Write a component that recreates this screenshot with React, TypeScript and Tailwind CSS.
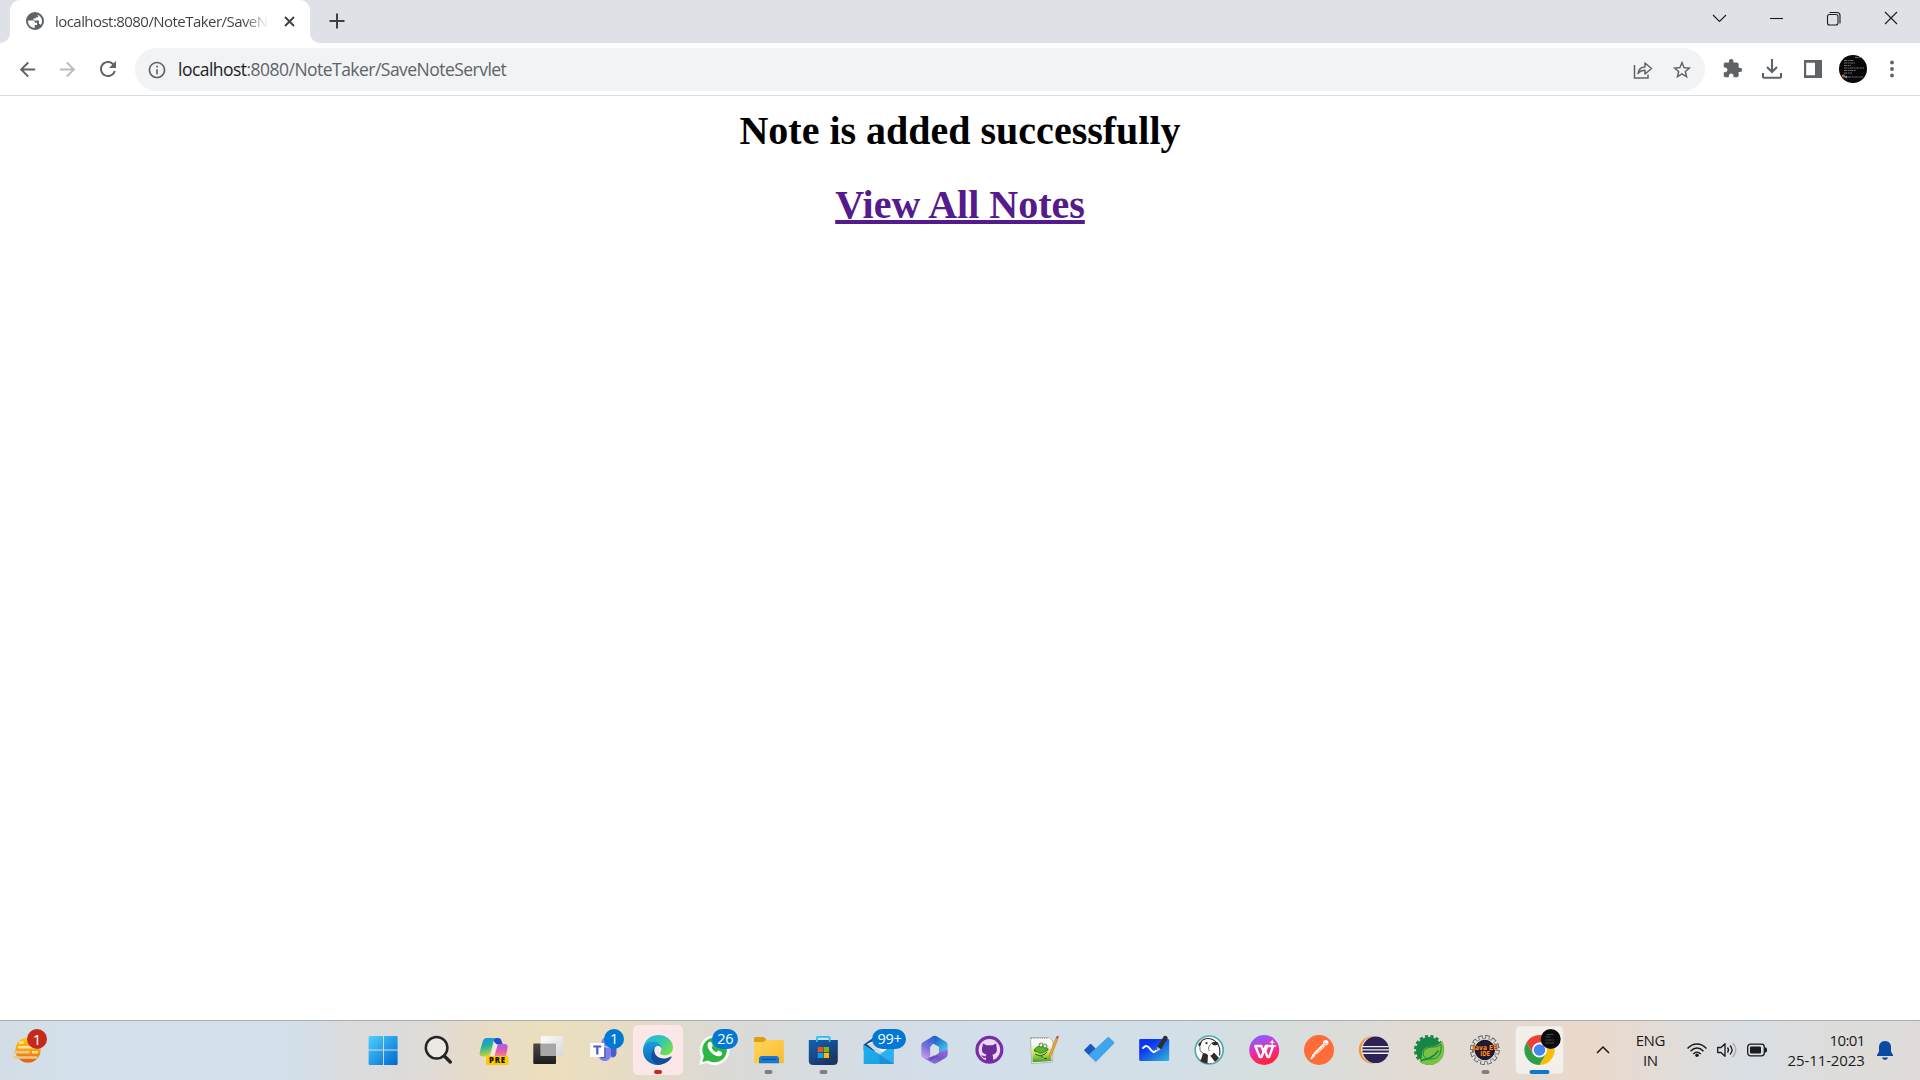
import React from "react";
import { MdArrowBack, MdArrowForward, MdRefresh, MdInfoOutline, MdStarBorder, MdExtension } from "react-icons/md";

type Kids = { children?: React.ReactNode };

function Art({ children }: Kids) {
  return (
    <svg className="block h-[60px] w-full" viewBox="0 0 55 60" preserveAspectRatio="xMinYMin meet" fill="none">
      {children}
    </svg>
  );
}

function StartArt() {
  return (
    <Art>
      <defs>
        <linearGradient id="win" gradientUnits="userSpaceOnUse" x1="14" y1="16" x2="42" y2="45">
          <stop stopColor="#4fd0ff" />
          <stop offset="1" stopColor="#0068cf" />
        </linearGradient>
      </defs>
      <path fill="url(#win)" d="M14.6 16H28v13.6H13.6V17zM28.9 16h13l.7.7v12.9H28.9zM13.6 30.6H28V45H14.3l-.7-.7zM28.9 30.6h13.7v13.7l-.7.7h-13z" />
    </Art>
  );
}

function SearchArt() {
  return (
    <Art>
      <circle cx="26.6" cy="27.7" r="10.8" fill="#f3f0ec" fillOpacity=".6" stroke="#252525" strokeWidth="2.500" />
      <path d="M34.300 36l6 6" stroke="#252525" strokeWidth="3.400" strokeLinecap="round" />
    </Art>
  );
}

function CopilotArt() {
  return (
    <Art>
      <defs>
        <linearGradient id="cpa" x1="0" y1="0" x2="0.2" y2="1">
          <stop stopColor="#1f8fe8" />
          <stop offset=".5" stopColor="#1fb4a0" />
          <stop offset="1" stopColor="#c9cf3a" />
        </linearGradient>
        <linearGradient id="cpb" x1="0" y1="0" x2="0" y2="1">
          <stop stopColor="#a55cf0" />
          <stop offset=".6" stopColor="#e45bb0" />
          <stop offset="1" stopColor="#f78c74" />
        </linearGradient>
      </defs>
      <path fill="#1b51c8" d="M26 18h7c2 0 3 1 3.600 3l1.200 3.500h-6z" />
      <path fill="url(#cpa)" d="M22 18h10c-2.500.5-3.500 3-4.200 6l-2.300 9c-.7 2.500-2 3.500-4 3.500h-4.300c-2.500 0-3-2.500-2.200-5.200L17.500 22c.8-2.600 2-4 4.500-4z" />
      <path fill="url(#cpb)" d="M33 24h7c2.200 0 3 1.700 2.500 4L41 36.500H26c2.300 0 3-1.500 3.700-4z" />
      <path fill="#f6ead7" d="M29.500 24.500h3L29.500 36H26z" />
      <rect x="21" y="36" width="22.400" height="9" rx="1.800" fill="#ffc800" />
      <text x="32.500" y="43.300" textAnchor="middle" fontFamily="Open Sans, sans-serif" fontWeight="800" fontSize="7.800" letterSpacing=".8" fill="#151515">PRE</text>
    </Art>
  );
}

function TaskViewArt() {
  return (
    <Art>
      <defs>
        <linearGradient id="tva" x1="0" y1="0" x2="0" y2="1">
          <stop stopColor="#4a4a4a" />
          <stop offset="1" stopColor="#1d1d1d" />
        </linearGradient>
        <linearGradient id="tvb" x1="0" y1="0" x2="1" y2="1">
          <stop stopColor="#fdfdfd" />
          <stop offset="1" stopColor="#d8d8d8" />
        </linearGradient>
      </defs>
      <rect x="13.300" y="23.600" width="22.700" height="20.400" rx="1" fill="url(#tva)" />
      <rect x="20.700" y="16.300" width="22.600" height="19.700" rx="1" fill="url(#tvb)" />
      <rect x="20.700" y="23.600" width="15.300" height="12.400" fill="#a8a8a8" />
    </Art>
  );
}

function TeamsArt() {
  return (
    <Art>
      <circle cx="39" cy="23" r="4" fill="#5059c9" />
      <path fill="#5059c9" d="M34 27.500h7.500V33c0 3-2 4.500-5 4.500z" />
      <circle cx="31" cy="22" r="4.500" fill="#7b83eb" />
      <path fill="#7b83eb" d="M24 27.500h12V34c0 4.500-2.500 7-6 7s-6-2-6-5z" />
      <path fill="#4a51ae" d="M26 27.500h4.500v10.700H26z" />
      <rect x="15.200" y="23" width="14" height="14" fill="#fff" />
      <path fill="#5059c9" d="M18.300 25.500h8v2h-2.900v7h-2.200v-7h-2.900z" />
    </Art>
  );
}

function EdgeArt() {
  return (
    <Art>
      <defs>
        <linearGradient id="ea" x1="0" y1="0" x2="1" y2=".7">
          <stop stopColor="#25b8e8" />
          <stop offset=".5" stopColor="#2fc5b8" />
          <stop offset="1" stopColor="#72e04a" />
        </linearGradient>
        <linearGradient id="eb" x1="0" y1="0" x2="0" y2="1">
          <stop stopColor="#1a9fe0" />
          <stop offset="1" stopColor="#0b62b8" />
        </linearGradient>
      </defs>
      <rect x="3" y="5" width="50" height="50" rx="5" fill="#fbe6e8" />
      <path fill="url(#ea)" d="M13.200 29C14 20 20.500 15 28.500 15 37 15 43 21 43 27.500c0 5-4 7.800-8 7.800-3.500 0-5.200-1.200-5-2.300.2-.8 1.400-1.600 1.300-3.800C31 25.300 27.500 23 23.500 23c-5 0-8.500 2.500-10.300 6z" />
      <path fill="url(#eb)" d="M13 30c.5-5.200 4.500-8.600 9.800-8.600 5 0 8.500 3.300 8.500 6.600-1.200-1.700-3-2.200-4.500-1.500-3.300 1.500-4.300 5-3.500 8.500.8 4 3.500 7.500 7.700 9.700-1.200.3-2.200.3-3 .3-8.500 0-15.500-6.500-15-15z" />
      <path fill="#0e4f97" d="M24.300 27.800c-3 4.200-4 9.200-1.600 12.700 2 3 5.500 4.700 8.600 4.100 4.500-.9 8-3.400 10.200-7 .5-.8-.2-1.300-1-.8-7.500 4-15.700.7-16.200-6z" />
      <path fill="#fbe6e8" d="M25 27.800c1.300-2.600 4.700-2.300 6.100.2.800 2.300-1 3.700-1.200 5 0 1.200 1.200 2.300 3.200 2.800-4.500.3-8.600-2.800-8.100-8z" />
      <rect x="24" y="50" width="8" height="4" rx="2" fill="#c42b1c" />
    </Art>
  );
}

function WhatsAppArt() {
  return (
    <Art>
      <path fill="#fff" d="M14.300 45l2-8A15 15 0 1 1 22 43z" />
      <path fill="#2cb742" d="M17.300 42l1.600-6a12.300 12.300 0 1 1 4.200 4.400z" />
      <path fill="#fff" d="M23.500 22.500c1-1.200 2.600-1 3.200.4l.9 2.100c.5 1.200-.8 1.900-1 2.700.8 2 2.500 3.600 4.800 4.500.8-.3 1.600-2 2.700-1.500l2.300 1.200c1.500 1 .8 3.200-1.200 4-2.600 1-6.300-.7-9-3.400-3-3-4.900-7.500-2.700-10z" />
    </Art>
  );
}

function Gray() {
  return <rect x="24.500" y="50" width="8" height="4" rx="2" fill="#7f7f7f" />;
}

function FolderArt() {
  return (
    <Art>
      <defs>
        <linearGradient id="fo" x1="0" y1="0" x2="1" y2="1">
          <stop stopColor="#ffd75e" />
          <stop offset="1" stopColor="#fbb92a" />
        </linearGradient>
      </defs>
      <path fill="#e09f12" d="M14 18.500c0-.9.500-1.500 1.500-1.500H24l3 3.500V25H14z" />
      <path fill="url(#fo)" d="M14 22h9.500l2.500-2h17.800v22.300c0 .7-.3 1-1 1H15c-.7 0-1-.3-1-1z" />
      <path fill="#1779d0" d="M19 43.300V39c0-2 1-3 3-3h14c2 0 3 1 3 3v4.300z" />
      <path stroke="#0b4f9d" strokeWidth="1.200" strokeLinecap="round" d="M22.500 39.300h13" />
      <Gray />
    </Art>
  );
}

function StoreArt() {
  return (
    <Art>
      <defs>
        <linearGradient id="st" x1="0" y1="0" x2=".6" y2="1">
          <stop stopColor="#0f63b5" />
          <stop offset="1" stopColor="#1c3561" />
        </linearGradient>
      </defs>
      <path fill="url(#st)" d="M13.800 20h29v20.500c0 3-1.500 4.500-4.500 4.500h-20c-3 0-4.500-1.500-4.500-4.500z" />
      <path stroke="#27bdf2" strokeWidth="1.800" d="M22 22v-4.300c0-.6.300-.8.800-.8h11c.5 0 .8.200.8.800V22" />
      <path fill="#f25022" d="M22.700 27h5.300v5.200h-5.300z" />
      <path fill="#7fba00" d="M28.700 27H34v5.200h-5.300z" />
      <path fill="#00a4ef" d="M22.700 33H28v5h-5.300z" />
      <path fill="#ffb900" d="M28.700 33H34v5h-5.300z" />
      <Gray />
    </Art>
  );
}

function MailArt() {
  return (
    <Art>
      <defs>
        <linearGradient id="ma" x1="0" y1="0" x2="1" y2="1">
          <stop stopColor="#1fb2ee" />
          <stop offset="1" stopColor="#1b9be2" />
        </linearGradient>
      </defs>
      <path fill="#114a8b" d="M13.700 24.500 26 16h6l11.700 8.500V31h-30z" />
      <path fill="#f6f6f6" d="M17 24l10-5h13v8l-10 8z" />
      <path fill="#d7d7d7" d="M17 24l6-1 10 10-3 2z" />
      <path fill="url(#ma)" d="M13.700 24.700 30 34.500l13.700-9.700V44h-30z" />
      <path fill="#45c5f4" d="M43.700 26v18L28 33.700z" opacity=".4" />
      <path fill="#1680d0" d="M43.700 44H30l-1-9.500z" opacity=".5" />
    </Art>
  );
}

function OfficeArt() {
  return (
    <Art>
      <defs>
        <linearGradient id="oa" x1=".7" y1="0" x2=".3" y2="1">
          <stop stopColor="#2a62d6" />
          <stop offset=".55" stopColor="#7b6fd8" />
          <stop offset="1" stopColor="#c39aec" />
        </linearGradient>
        <linearGradient id="ob" x1="0" y1="0" x2=".8" y2="1">
          <stop stopColor="#1647a0" />
          <stop offset=".5" stopColor="#2e93dc" />
          <stop offset="1" stopColor="#54d0f0" />
        </linearGradient>
        <linearGradient id="oc" x1="0" y1="1" x2="1" y2="0">
          <stop stopColor="#9a8cf2" />
          <stop offset=".5" stopColor="#7a55c8" />
          <stop offset="1" stopColor="#a06ad6" />
        </linearGradient>
      </defs>
      <path fill="url(#ob)" d="M26.500 16.300c1.400-.7 2.800-.7 4.100 0l9.200 5.500c1.200.7 1.800 1.700 1.800 3v9L32 36l1-9-7-4z" />
      <path fill="url(#oc)" d="M16.800 37.500 23 38l10-5.500 8.600-3v5.100c0 1.400-.6 2.400-1.800 3.200l-9 5.300c-1.400.8-3 .8-4.400 0z" />
      <path fill="url(#oa)" d="M26.500 16.400c2-1 4 0 3.400 1.900l-3.400 6L24.300 27v7c0 3-1.500 4.700-4 4.700-2 0-5-1-5-4.100V25.500c0-1.500.6-2.500 1.800-3.200z" />
      <path fill="#4b3a9c" d="M22.500 37.500 32 36l-8 5z" opacity=".5" />
      <path fill="#d6dfe7" d="M24.300 27.200 28.500 24.600l4.500 2.700v5.600l-4.500 2.800-4.200-2.700z" />
    </Art>
  );
}

function GithubArt() {
  return (
    <Art>
      <circle cx="28.400" cy="29.800" r="14" fill="#7a2da5" />
      <circle cx="28.400" cy="29.800" r="10.800" fill="#e9daf0" />
      <path fill="#6f2a9b" d="M22 23.500l3.700 1.800h5.800l3.600-1.800.7 5c.5 4-1.700 5.700-4.600 6.200.8.800 1 2 1 6.800h-7.200v-3.700c-2.500.5-3.600-.6-4.600-2.600 1.600-.2 2 1.400 4.500 1 0-.7.100-1.200.6-1.600-3-.5-5-2.300-4.500-6z" />
    </Art>
  );
}

function NotepadArt() {
  return (
    <Art>
      <defs>
        <linearGradient id="np" x1="0" y1="0" x2="0" y2="1">
          <stop offset=".25" stopColor="#fafaf5" />
          <stop offset=".6" stopColor="#cfe45c" />
          <stop offset="1" stopColor="#3b9a22" />
        </linearGradient>
      </defs>
      <path fill="#f7f7f7" stroke="#98a09a" strokeWidth=".7" d="M14.600 17.500h18l4.500 3.500-.5 21-21 1.600z" />
      <path fill="url(#np)" d="M15.600 19h19l1 22-19 1.200z" />
      <path d="M15 18.300h17" stroke="#8d8d8d" strokeDasharray="1 1.200" />
      <path fill="#55b82b" stroke="#215f16" strokeWidth=".8" d="M18 31c1-4 6-6 9-4l4 1c2 1 1 3-1 3-3 2-7 3-8 1z" />
      <circle cx="25" cy="25" r="2" fill="#e6eed8" stroke="#315a24" strokeWidth=".7" />
      <circle cx="29" cy="26" r="2" fill="#e6eed8" stroke="#315a24" strokeWidth=".7" />
      <path stroke="#245e1c" d="M19 34l5 2 5-2 2-2M26 38v-2M28 38.500h3" />
      <path fill="#f0a732" stroke="#b36b18" strokeWidth=".5" d="M33.300 34.500 40 18l2 .8L35.400 35.300 33 38z" />
      <path fill="#b64b59" d="m40 18 .9-2.200 2 .8-.9 2.200z" />
    </Art>
  );
}

function TodoArt() {
  return (
    <Art>
      <path fill="#195abd" d="M13.600 29.600l5.200-5.300c.5-.5 1.100-.5 1.600 0l5.700 5.600-6.200 7.200-6.300-6.200c-.5-.4-.5-.9 0-1.300z" />
      <path fill="#41a5ee" d="M24 41.400l-5.700-5.600c-.4-.5-.4-1 0-1.500l18.300-17c.5-.5 1-.5 1.500 0l5 4.800c.4.500.4 1 0 1.500L25.500 41.400c-.5.500-1 .5-1.500 0z" />
    </Art>
  );
}

function WhiteboardArt() {
  return (
    <Art>
      <defs>
        <linearGradient id="wb" x1="0" y1="0" x2="1" y2="1">
          <stop offset=".3" stopColor="#0b36f0" />
          <stop offset="1" stopColor="#2fb9d6" />
        </linearGradient>
      </defs>
      <rect x="13.200" y="19" width="30" height="22" rx="1.300" fill="url(#wb)" />
      <path stroke="#fff" strokeWidth="2" strokeLinecap="round" d="M17 28c3-3 5-2.200 7 .7 2 3 4 4.500 6 2" />
      <path fill="#2e2e31" d="M31.400 26.800 37.800 16.300c1-1.500 4.500.4 3.800 2.200L35 29.300l-3.200 1.500z" />
      <path fill="#bdbdbd" d="m31.400 26.800 3.500 2.400-4.400 2.800z" />
    </Art>
  );
}

function BeaverArt() {
  return (
    <Art>
      <circle cx="28.200" cy="30" r="14" fill="#fff" stroke="#51abb3" strokeWidth="1.700" />
      <path fill="#382923" d="M19 40.500c2.500-2 1.500-5.500 3.500-7.500 2.500.3 4.300 1.300 5.300 3.200 2-.5 4-1.700 5.200-3.700l5 5.500a13 13 0 0 1-19 2.500z" />
      <path fill="#fff" d="M27 34.500l2.500 1.500 4.500 6c-2.500 1.200-5 1.400-7.500 1z" />
      <path fill="#382923" d="M17.500 25.500c-.8-2 1.500-4 3.200-2.900l-1.700 4.500zM30 23c2-1.500 6-1.500 7.500 0-1.200 3.200-4.700 3.500-7.500 0z" />
      <path stroke="#382923" strokeWidth="1.200" d="M19.500 22.500c3-5 11-6 17 1 2.500 4 3 8 2 12" />
      <path stroke="#382923" strokeWidth=".7" d="M30 24c-2.500 1.500-3 5-1.500 7M19 27c-.5 3 .5 5 3 6" />
      <circle cx="25.500" cy="23.200" r="1.100" fill="#382923" />
    </Art>
  );
}

function WpsArt() {
  return (
    <Art>
      <defs>
        <linearGradient id="wp" x1=".35" y1="0" x2=".65" y2="1">
          <stop offset=".05" stopColor="#8a5cff" />
          <stop offset=".5" stopColor="#ec2bac" />
          <stop offset=".85" stopColor="#ff2545" />
        </linearGradient>
      </defs>
      <circle cx="28.200" cy="30" r="15" fill="url(#wp)" />
      <path stroke="#fff" strokeWidth="2.300" strokeLinejoin="round" d="M27.500 31.500 25.300 26H19.300l4.500 11h1.700l4.300-11h1.500l-2 5.300L31.500 37h1.600l4-11h-5.600" />
      <path fill="#fff" d="m36.200 19.300.8 2.100 2.100.8-2.100.8-.8 2.100-.8-2.100-2.100-.8 2.100-.8zM39 24.200l.5 1.200 1.200.5-1.200.5-.5 1.200-.5-1.200-1.200-.5 1.200-.5z" />
    </Art>
  );
}

function PostmanArt() {
  return (
    <Art>
      <circle cx="28" cy="30" r="15" fill="#ff6c37" />
      <circle cx="34.700" cy="22.800" r="2.700" fill="#fff" />
      <path fill="#fff" d="M31.800 24l2.200 2.500-7.600 7.300-5.400 2 2.700-4z" />
      <path stroke="#fff" strokeLinecap="round" strokeWidth="1.200" d="M22 35 20 38.500M23.500 35.500 20.500 38.500" />
      <path stroke="#ff6c37" strokeWidth=".7" d="M25 33.500l7.500-7M33 22.500l2 1.700 1.500-.7" />
    </Art>
  );
}

function EclipseArt() {
  return (
    <Art>
      <circle cx="26.400" cy="29.800" r="13.600" fill="#f59331" />
      <circle cx="28.600" cy="29.800" r="13.500" fill="#e2dfdd" />
      <circle cx="29.700" cy="29.800" r="13.300" fill="#2c2255" />
      <path stroke="#f5f4f8" strokeWidth="1.400" d="M16.700 26.600h26M16.300 29.900h26.700M16.700 33.200h26" />
    </Art>
  );
}

function SpringArt() {
  return (
    <Art>
      <circle cx="28" cy="30" r="13.800" stroke="#178544" strokeWidth="2.500" strokeDasharray="3.200 2.300" />
      <circle cx="28" cy="30" r="13" fill="#178544" />
      <path fill="#7ac043" d="M41 20.500C46.500 31 42 45 28 45c-4.500 0-7.500-1.700-10-4.300 3-1.500 2.800-4 3-7 .7-6.500 6-7 11-7.500 4.500-.5 7.500-2.500 9-5.700z" />
      <path fill="#7ac043" stroke="#178544" strokeWidth="1" d="M40 24.500c.8 7-1.500 14-9 14.500-3.500.3-6-.5-7.500-1.800-3.500-5 .5-9.300 6-9.900 4.500-.3 7.500-.8 10.500-2.800z" />
      <path stroke="#178544" strokeWidth="1.500" d="M20 40.500C27 39.500 33 37 37.500 30.500" />
    </Art>
  );
}

function JavaArt() {
  return (
    <Art>
      <circle cx="27.800" cy="30" r="12.600" stroke="#555" strokeWidth="4.600" strokeDasharray="4.200 2.400" />
      <circle cx="27.800" cy="30" r="11.700" fill="#d8d8d8" stroke="#666" strokeWidth=".7" />
      <circle cx="27.800" cy="30" r="12.400" stroke="#dcdcdc" strokeWidth="3.400" strokeDasharray="2.900 3.600" strokeDashoffset="-.6" />
      <circle cx="27.800" cy="30" r="9.700" fill="#20183a" stroke="#111" />
      <g fontFamily="DejaVu Sans, sans-serif" fontWeight="bold" fill="#ff8a24" stroke="#482000" strokeWidth=".7" paintOrder="stroke" textAnchor="middle">
        <text x="28" y="29.500" fontSize="6.800" textLength="24.500" lengthAdjust="spacingAndGlyphs">Java EE</text>
        <text x="28.200" y="35.600" fontSize="6.800" textLength="10" lengthAdjust="spacingAndGlyphs">IDE</text>
      </g>
      <Gray />
    </Art>
  );
}

function ChromeArt() {
  return (
    <Art>
      <rect x="3.500" y="6" width="48" height="48" rx="4.500" fill="#f3efeb" stroke="#dfd8d2" strokeWidth=".5" />
      <path fill="#ea4335" d="M14.500 22.500a15 15 0 0 1 26 0H27.500l-6.500 11.200z" />
      <path fill="#fbbc04" d="M40.500 22.500a15 15 0 0 1-13 22.500L34 33.700l-6.500-11.200z" />
      <path fill="#2c9f47" d="M14.500 22.500a15 15 0 0 0 13 22.500L34 33.700H21z" />
      <circle cx="27.500" cy="30" r="7.400" fill="#fff" />
      <circle cx="27.500" cy="30" r="5.800" fill="#4285f4" />
      <circle cx="38.700" cy="19" r="10" fill="#0b0b0b" />
      <path stroke="#444" strokeWidth="1" d="M34.500 14.500h7M33.500 17h5M33.500 20h8M33 23h9" />
      <rect x="17.500" y="50" width="20" height="4" rx="2" fill="#0a78d4" />
    </Art>
  );
}

const apps: { name: string; art: () => React.ReactElement; badge?: string; place?: string }[] = [
  { name: "Start", art: StartArt },
  { name: "Search", art: SearchArt },
  { name: "Copilot", art: CopilotArt },
  { name: "Task view", art: TaskViewArt },
  { name: "Teams", art: TeamsArt, badge: "1", place: "left-[29px] w-5" },
  { name: "Edge", art: EdgeArt },
  { name: "WhatsApp", art: WhatsAppArt, badge: "26", place: "left-[27px] w-[26px]" },
  { name: "Explorer", art: FolderArt },
  { name: "Store", art: StoreArt },
  { name: "Mail", art: MailArt, badge: "99+", place: "left-[22px] w-[34px]" },
  { name: "Office", art: OfficeArt },
  { name: "GitHub", art: GithubArt },
  { name: "Notepad++", art: NotepadArt },
  { name: "To Do", art: TodoArt },
  { name: "Whiteboard", art: WhiteboardArt },
  { name: "DBeaver", art: BeaverArt },
  { name: "WPS", art: WpsArt },
  { name: "Postman", art: PostmanArt },
  { name: "Eclipse", art: EclipseArt },
  { name: "Spring", art: SpringArt },
  { name: "Java EE", art: JavaArt },
  { name: "Chrome", art: ChromeArt },
];

function TabStrip() {
  return (
    <header className="flex h-[43px] shrink-0 bg-[#dee1e6]">
      <div className="flex w-2.5 items-end bg-white">
        <div className="h-full w-full rounded-br-[10px] bg-[#dee1e6]" />
      </div>
      <div className="bg-[#dee1e6]">
        <div className="flex h-full w-[300px] items-center rounded-t-[10px] bg-white pb-px pl-4">
          <svg className="size-[18px] shrink-0" viewBox="0 0 18 18">
            <circle cx="9" cy="9" r="9" fill="#5f6368" />
            <path fill="#fff" d="M2 8.500h4.600c1.700 0 2.200 1 2.400 2.200h2v2.200H8.800v2.900C5 15.900 1.800 12.900 2 8.500zM11 2.400c3 .9 5 3.500 5 6.600 0 1.600-.5 3-1.300 4.100-.2-.8-.8-1.200-1.700-1.200V9.500c0-.7-.4-1-1-1H7.500v-2h1.700c.8 0 1-.5 1-1.200h1.200c.8 0 1-.5 1-1z" />
          </svg>
          <div className="ml-[11px] w-[214px] shrink-0 overflow-hidden whitespace-nowrap bg-[linear-gradient(90deg,#3c4043_88%,transparent_100%)] bg-clip-text font-['Open_Sans',sans-serif] text-[15px] leading-6 tracking-[-0.55px] text-transparent">
            localhost:8080/NoteTaker/SaveNoteServlet
          </div>
          <svg className="ml-[15px] size-[11px] shrink-0" viewBox="0 0 11 11" stroke="#3c4043" strokeWidth="1.900">
            <path d="M1 1l9 9M10 1l-9 9" />
          </svg>
        </div>
      </div>
      <div className="flex flex-1 items-start justify-between bg-white">
        <div className="flex h-full flex-1 items-center justify-between rounded-bl-[10px] bg-[#dee1e6] pr-[22px]">
          <svg className="-mt-px ml-[19px] size-4" viewBox="0 0 16 16" stroke="#3c4043" strokeWidth="2">
            <path d="M8 .5v15M.5 8h15" />
          </svg>
          <svg className="-mt-[7px] h-[18px] w-[188px]" viewBox="0 0 188 18" fill="none" stroke="#1b1b1b" strokeWidth="1.100">
            <path d="M3 6l6.500 6.500L16 6" />
            <path d="M60 9.500h13" />
            <rect x="117.500" y="5.500" width="10.500" height="10.500" rx="2" />
            <path d="M119.500 3.500h7.500a3 3 0 0 1 3 3v8" />
            <path d="M175 3l12 12M187 3l-12 12" />
          </svg>
        </div>
      </div>
    </header>
  );
}

function Toolbar() {
  return (
    <div className="flex h-[53px] shrink-0 items-start border-b border-[#dadce0] bg-white pt-[5px]">
      <div className="flex h-[43px] w-[135px] items-center gap-[17px] pb-px pl-4 text-[#5f6368]">
        <MdArrowBack size={23} />
        <MdArrowForward size={23} className="text-[#babcbe]" />
        <MdRefresh size={24} />
      </div>
      <div className="flex h-[43px] w-[1570px] items-center rounded-full bg-[#f1f3f4] pl-3 pr-3 text-[#5f6368]">
        <MdInfoOutline size={20} />
        <div className="ml-[11px] flex-1 whitespace-nowrap font-['Open_Sans',sans-serif] text-[17.500px] tracking-[-0.530px]">
          <span className="text-[#202124]">localhost</span>:8080/NoteTaker/SaveNoteServlet
        </div>
        <svg className="size-5" viewBox="0 0 20 20" fill="none" stroke="#5f6368" strokeWidth="1.500">
          <path d="M1.500 5v13h13.500v-3.500" />
          <path strokeLinejoin="round" d="M5 13.500c.7-4.500 3.500-6.500 7-6.500V3l6.500 5.500L12 14v-3.700c-3 0-5 .7-7 3.200z" />
        </svg>
        <MdStarBorder size={22} className="ml-[18px]" />
      </div>
      <div className="flex h-[43px] items-center text-[#5f6368]">
        <MdExtension size={21} className="-mt-0.5 ml-[17px]" />
        <svg className="-mt-0.5 ml-[19px] size-5" viewBox="0 0 20 20" fill="none" stroke="#5f6368" strokeWidth="2.100">
          <path d="M10 0v12.500M5 8l5 5 5-5M1 14v3.500c0 .8.500 1.300 1.300 1.300h15.400c.8 0 1.300-.5 1.300-1.300V14" />
        </svg>
        <svg className="-mt-0.5 ml-[22px] size-[18px]" viewBox="0 0 18 18">
          <path fill="#5f6368" fillRule="evenodd" d="M0 0h18v18H0zM2.200 2.700v12.600H11V2.700z" />
        </svg>
        <svg className="-mt-0.5 ml-[17px] size-7" viewBox="0 0 28 28">
          <circle cx="14" cy="14" r="14" fill="#080808" />
          <path stroke="#777" strokeWidth=".9" strokeDasharray="3 .6 2 .5" d="M16 2.500h6M5 5.500h10M5 8h11M5 10.500h7M5 13h20M5 15.500h12M5 18h8M9 22h15" />
          <circle cx="4.500" cy="21" r="1.700" fill="#d84b2a" />
          <circle cx="7.200" cy="22" r="1.300" fill="#38a4dd" />
        </svg>
        <svg className="-mt-0.5 ml-[23px] h-[18px] w-1" viewBox="0 0 4 18" fill="#5f6368">
          <circle cx="2" cy="2.500" r="1.900" />
          <circle cx="2" cy="9" r="1.900" />
          <circle cx="2" cy="15.500" r="1.900" />
        </svg>
      </div>
    </div>
  );
}

function Taskbar() {
  return (
    <footer className="flex h-[60px] shrink-0 bg-[linear-gradient(90deg,#d3dde5_0,#d3e0ec_90px,#d3dfea_290px,#dbdcde_350px,#dedbd8_420px,#e8dcc4_490px,#ecdfbd_550px,#e7dcc4_620px,#dcdad3_710px,#d6dce0_810px,#d2deea_950px,#d3dfe6_1180px,#d5dfdf_1260px,#e1dbd4_1400px,#e2dbd3_1480px,#ead9cb_1590px,#e2dcd8_1670px,#d9dfe5_1750px,#dddddb_1830px,#e0dbd8_1920px)] font-['Open_Sans',sans-serif] shadow-[inset_0_1px_0_#a9adb0]">
      <div className="relative w-[354.600px] shrink-0">
        <svg className="h-[60px] w-[60px]" viewBox="0 0 60 60">
          <defs>
            <linearGradient id="sun" x1="0" y1="0" x2="0" y2="1">
              <stop stopColor="#ffcb08" />
              <stop offset=".5" stopColor="#f9a015" />
              <stop offset="1" stopColor="#e8590c" />
            </linearGradient>
          </defs>
          <circle cx="28" cy="30" r="12.600" fill="url(#sun)" />
          <g stroke="#f8e0a0" strokeWidth="2.400" strokeLinecap="round">
            <path d="M20 22.500h3M19 27.300h17M33 32.300h4" />
            <path stroke="#e6c98d" d="M14.500 32.300h14M14.500 37.500h22" />
          </g>
        </svg>
        <span className="absolute left-[27px] top-[9px] flex size-5 items-center justify-center rounded-full bg-[#c42b1c] text-[15px] text-white">1</span>
      </div>
      <div className="grid w-[1212.200px] shrink-0 grid-cols-22">
        {apps.map(({ name, art: Icon, badge, place }) => (
          <div key={name} className="relative">
            <Icon />
            {badge && (
              <span className={`absolute top-[9px] flex h-5 items-center justify-center rounded-full bg-[#0078d4] text-[14.500px] tracking-[-0.3px] text-white ${place}`}>{badge}</span>
            )}
          </div>
        ))}
      </div>
      <div className="flex h-[60px] flex-1 items-center text-[#1b1b1b]">
        <svg className="ml-[29px] h-2.5 w-[14px] shrink-0" viewBox="0 0 14 10" fill="none" stroke="#1b1b1b" strokeWidth="1.500">
          <path d="M1 8l6-6 6 6" />
        </svg>
        <div className="ml-[25px] w-[31px] text-center text-[15px] leading-5 tracking-[-0.5px]">
          ENG
          <br />
          IN
        </div>
        <svg className="ml-[21px] h-4 w-5 shrink-0" viewBox="0 0 20 16" fill="none" stroke="#1b1b1b" strokeWidth="1.400">
          <path d="M.5 6.500c5.500-6 13.500-6 19 0M3.500 9.200c4-4.200 9-4.200 13 0M6.300 12c2.400-2.500 5-2.500 7.400 0" />
          <circle cx="10" cy="13.300" r="1.700" fill="#1b1b1b" stroke="none" />
        </svg>
        <svg className="ml-2.5 h-4 w-5 shrink-0" viewBox="0 0 20 16" fill="none" stroke="#1b1b1b" strokeWidth="1.300">
          <path strokeLinejoin="round" d="M.7 5.500H4L8 1.700v12.600l-4-3.800H.7zM10.500 5.500c1.300 1.600 1.300 3.400 0 5M13 3.500c2.500 2.700 2.500 6.300 0 9" />
          <path stroke="#aaa" d="M15.500 1c4.300 4 4.300 10 0 14" />
        </svg>
        <svg className="ml-2.5 h-[14px] w-5 shrink-0" viewBox="0 0 20 14">
          <rect x=".7" y="1.200" width="16.600" height="11.600" rx="2.800" fill="none" stroke="#1b1b1b" strokeWidth="1.300" />
          <rect x="3" y="3.500" width="11" height="7" rx="1" fill="#1b1b1b" />
          <path fill="#1b1b1b" d="M18 4.500h1c.7.500 1 1 1 2.500s-.3 2-1 2.500h-1z" />
        </svg>
        <div className="ml-[18px] w-[80px] whitespace-nowrap text-right text-[15px] leading-5 tracking-[-0.1px]">
          <div className="tracking-[-0.6px]">10:01</div>
          25-11-2023
        </div>
        <svg className="ml-3 h-[19px] w-4 shrink-0" viewBox="0 0 16 19" fill="#0b4aa2">
          <path d="M8 0c4 0 6 3 6 6v4.500l2 3.500v1H0v-1l2-3.500V6c0-3 2-6 6-6zM5 16.500h6c-.5 1.700-1.500 2.300-3 2.300s-2.500-.6-3-2.300z" />
        </svg>
      </div>
    </footer>
  );
}

export default function App() {
  return (
    <div className="flex h-[1080px] w-[1920px] flex-col overflow-hidden bg-white">
      <TabStrip />
      <Toolbar />
      <main className="flex-1 pt-3 text-center font-['Liberation_Serif',serif] text-[40px] font-bold leading-[46px] text-black">
        <h1>Note is added successfully</h1>
        <h1 className="mt-7">
          <a className="text-[#551a8b] underline decoration-[4px] underline-offset-[2px]" href="#notes">View All Notes</a>
        </h1>
      </main>
      <Taskbar />
    </div>
  );
}
